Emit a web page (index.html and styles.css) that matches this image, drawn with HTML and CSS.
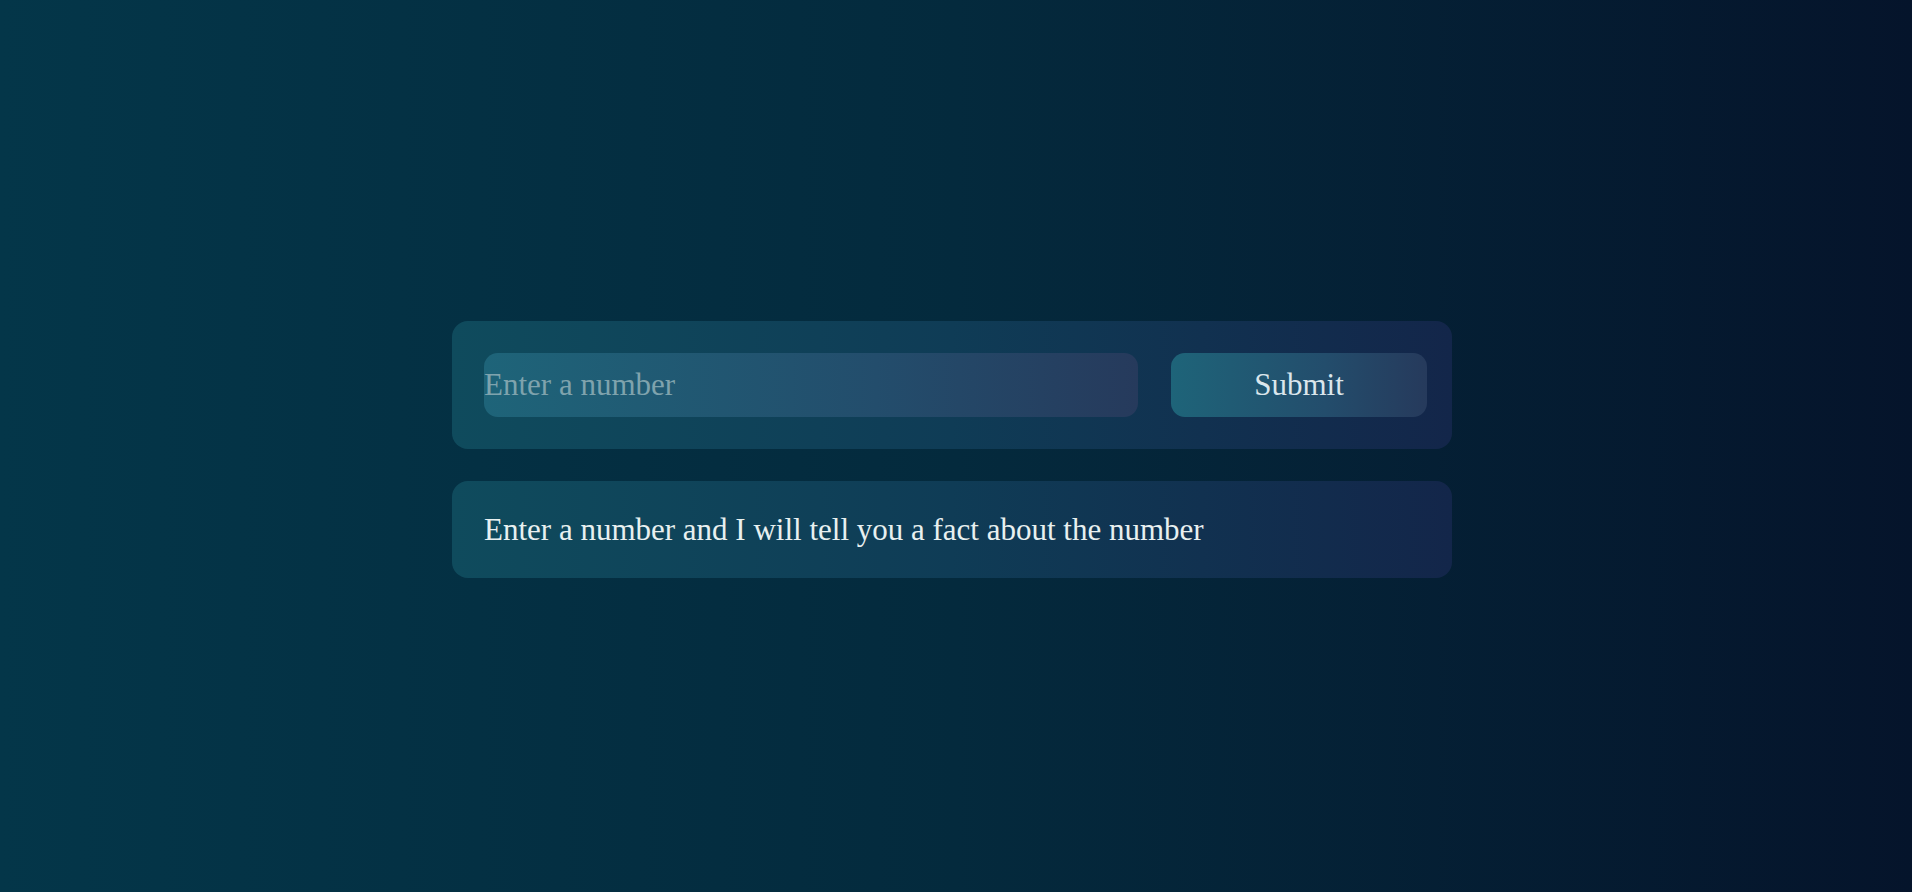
FILE: index.html
```html
<!DOCTYPE html>
<html lang="en">
<head>
<meta charset="utf-8">
<title>Number Facts</title>
<link rel="stylesheet" href="styles.css">
</head>
<body>
<main class="page">
  <div class="wrap">
    <form class="card form-card" onsubmit="return false;">
      <input class="num-input" type="text" placeholder="Enter a number">
      <button class="submit-btn" type="submit">Submit</button>
    </form>
    <div class="card result-card">
      <p class="result-text">Enter a number and I will tell you a fact about the number</p>
    </div>
  </div>
</main>
</body>
</html>
```

FILE: styles.css
```css
* {
  box-sizing: border-box;
}

html, body {
  margin: 0;
  padding: 0;
  height: 100%;
}

body {
  background: linear-gradient(to right, #043649 0%, #042a3d 50%, #05142b 100%);
  font-family: "Liberation Serif", "DejaVu Serif", serif;
  color: #e8f0f0;
}

.page {
  min-height: 100vh;
  display: flex;
  align-items: center;
  justify-content: center;
  padding: 7px 8px 0 0;
}

.wrap {
  width: 1000px;
  display: flex;
  flex-direction: column;
  gap: 32px;
}

.card {
  border-radius: 16px;
  background: linear-gradient(to right, #0f4b5d 0%, #0f3c56 50%, #13264a 100%);
}

.form-card {
  margin: 0;
  display: flex;
  align-items: center;
  gap: 33px;
  padding: 32px 25px 32px 32px;
}

.num-input {
  flex: 1;
  height: 64px;
  border: none;
  outline: none;
  border-radius: 14px;
  padding: 0;
  background: linear-gradient(to right, #1e6479 0%, #234d6c 60%, #263a5c 100%);
  font-family: "Liberation Serif", "DejaVu Serif", serif;
  font-size: 31px;
  color: #e8f0f0;
}

.num-input::placeholder {
  color: #7fa3ad;
}

.submit-btn {
  width: 256px;
  height: 64px;
  border: none;
  border-radius: 14px;
  background: linear-gradient(to right, #1e6479 0%, #234d6c 60%, #263a5c 100%);
  font-family: "Liberation Serif", "DejaVu Serif", serif;
  font-size: 31px;
  color: #dbe6ec;
  cursor: pointer;
}

.result-card {
  padding: 32px;
}

.result-text {
  margin: 0;
  font-size: 31px;
  line-height: 33px;
  color: #e8f0f0;
}
```
